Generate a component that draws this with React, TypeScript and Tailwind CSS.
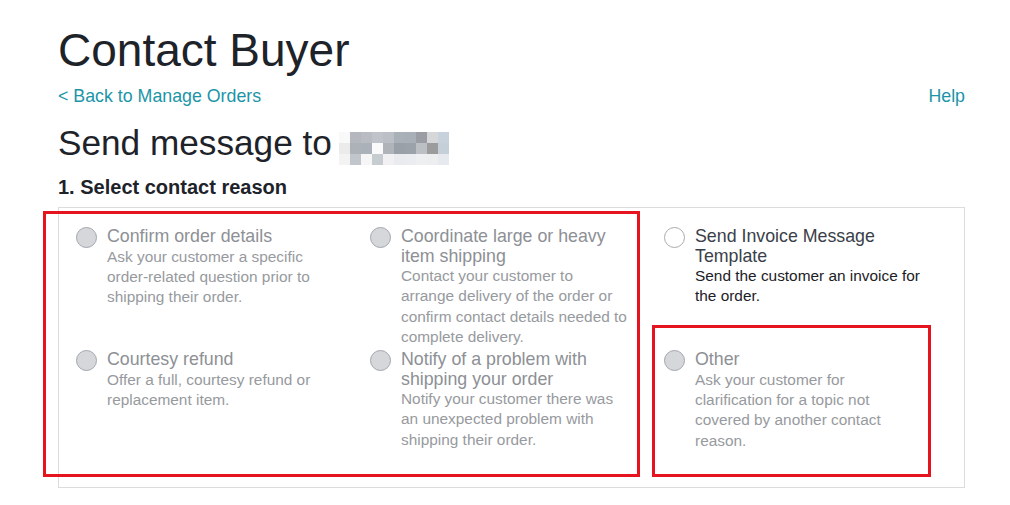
import React from 'react';

type Reason = {
  title: string;
  description: string;
  enabled: boolean;
};

// grid order: row by row, three columns
const REASONS: Reason[] = [
  {
    title: 'Confirm order details',
    description: 'Ask your customer a specific order-related question prior to shipping their order.',
    enabled: false,
  },
  {
    title: 'Coordinate large or heavy item shipping',
    description:
      'Contact your customer to arrange delivery of the order or confirm contact details needed to complete delivery.',
    enabled: false,
  },
  {
    title: 'Send Invoice Message Template',
    description: 'Send the customer an invoice for the order.',
    enabled: true,
  },
  {
    title: 'Courtesy refund',
    description: 'Offer a full, courtesy refund or replacement item.',
    enabled: false,
  },
  {
    title: 'Notify of a problem with shipping your order',
    description: 'Notify your customer there was an unexpected problem with shipping their order.',
    enabled: false,
  },
  {
    title: 'Other',
    description: 'Ask your customer for clarification for a topic not covered by another contact reason.',
    enabled: false,
  },
];

// pixelated (blurred) buyer name
const MOSAIC: string[][] = [
  ['#f9f9f9', '#b4b8be', '#b9bdc3', '#c0c4ca', '#bcc0c6', '#aab0b8', '#a9afb6', '#9a9ea4', '#d6d7d9', '#c8d2dc'],
  ['#ebebeb', '#adb2b8', '#aab1b9', '#fafafa', '#b0b3b8', '#9aa0a8', '#9ca2aa', '#bcbfc4', '#9c9c9c', '#c5cfd8'],
  ['#f3f3f3', '#c0c6cc', '#f6f6f6', '#c7ccd1', '#f1f1f3', '#eaebee', '#ebecef', '#eeeff1', '#edeef0', '#e6eaee'],
];

function BlurredName() {
  return (
    <svg width="110" height="33" viewBox="0 0 110 33" className="ml-[7px] mt-[9px] shrink-0">
      {MOSAIC.map((row, r) =>
        row.map((c, i) => <rect key={`${r}-${i}`} x={i * 11} y={r * 11} width="11" height="11" fill={c} />),
      )}
    </svg>
  );
}

function ReasonOption({ reason }: { reason: Reason }) {
  return (
    <label className="flex items-start gap-[10px]">
      <span
        className={
          reason.enabled
            ? 'h-[21px] w-[21px] shrink-0 rounded-full border-[1.5px] border-[#a9abae] bg-white'
            : 'h-[21px] w-[21px] shrink-0 rounded-full border-[1.5px] border-[#a2a6ac] bg-[#d5d7db]'
        }
      />
      <span className="w-[227px]">
        <span
          className={`block text-[17.8px] leading-[19.5px] ${
            reason.enabled ? 'text-[#3a4049]' : 'text-[#8d9095]'
          }`}
        >
          {reason.title}
        </span>
        <span
          className={`block text-[15.4px] leading-[20.3px] ${
            reason.enabled ? 'text-[#1d2126]' : 'text-[#979a9e]'
          }`}
        >
          {reason.description}
        </span>
      </span>
    </label>
  );
}

export default function App() {
  return (
    <div
      className="relative h-[505px] w-[1010px] overflow-hidden bg-white"
      style={{ fontFamily: '"Liberation Sans", Arial, sans-serif' }}
    >
      <div className="ml-[58px] w-[907px] pt-[27px]">
        <h1 className="text-[46px] font-normal leading-[46px] text-[#1e232a]">Contact Buyer</h1>

        <div className="mt-[13px] flex items-center justify-between text-[17.8px] leading-[20px] text-[#1c95a8]">
          <a href="#">&lt; Back to Manage Orders</a>
          <a href="#">Help</a>
        </div>

        <div className="mt-[17px] flex items-start">
          <h2 className="text-[35.2px] font-normal leading-[40px] text-[#1e232a]">Send message to</h2>
          <BlurredName />
        </div>

        <h3 className="mt-[10px] text-[20px] font-bold leading-[24px] text-[#1e232a]">1. Select contact reason</h3>

        <div className="mt-[8px] grid grid-cols-[294px_294px_294px] gap-y-[3px] border border-[#dcdcdc] pb-[36px] pl-[17px] pt-[19px]">
          {REASONS.map((r, i) => (
            <ReasonOption key={i} reason={r} />
          ))}
        </div>
      </div>

      {/* red annotation outlines */}
      <div className="pointer-events-none absolute left-[43px] top-[211px] h-[266px] w-[597px] border-[3px] border-[#e5141f]" />
      <div className="pointer-events-none absolute left-[652px] top-[325px] h-[152px] w-[279px] border-[3px] border-[#e5141f]" />
    </div>
  );
}
